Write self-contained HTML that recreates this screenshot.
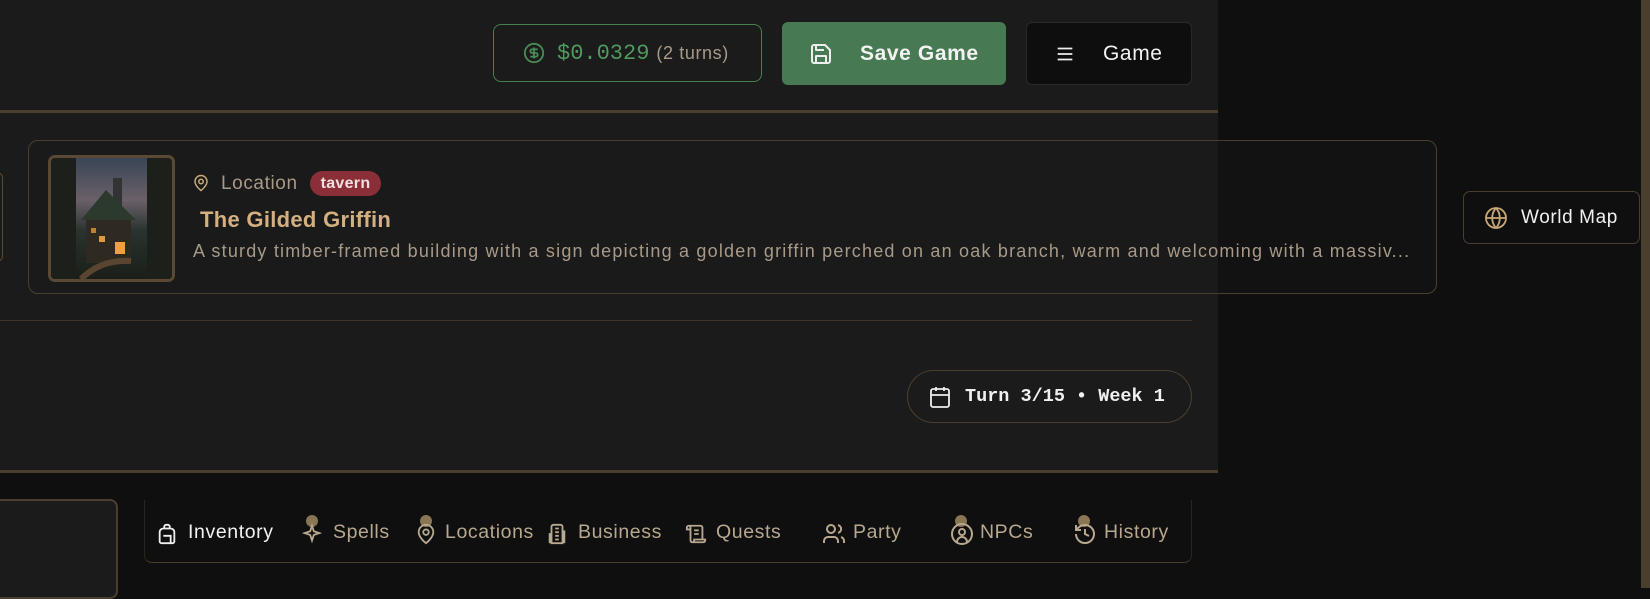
<!DOCTYPE html>
<html><head><meta charset="utf-8"><style>
*{box-sizing:border-box;margin:0;padding:0}
body{width:1650px;height:588px;overflow:hidden;background:#0f0f0f;font-family:"Liberation Sans",sans-serif;position:relative;letter-spacing:0.6px}
.a{position:absolute}
.mono{font-family:"Liberation Mono",monospace;letter-spacing:0}
</style></head><body>
<div class="a" style="left:0;top:0;width:1218px;height:472px;background:#1b1b1b"></div>
<div class="a" style="left:1641px;top:0;width:9px;height:588px;background:#4a3f2e"></div>
<div class="a" style="left:0;top:110px;width:1218px;height:3px;background:#4a3f2e"></div>
<div class="a" style="left:0;top:470px;width:1218px;height:3px;background:#4a3f2e"></div>
<div class="a" style="left:0;top:320px;width:1192px;height:1px;background:#3d352a"></div>

<!-- cost -->
<div class="a" style="left:493px;top:24px;width:269px;height:58px;border:1px solid #47804f;border-radius:8px;display:flex;align-items:center;padding-left:29px">
<svg width="22" height="22" viewBox="0 0 24 24" fill="none" stroke="#4a8a55" stroke-width="2"><circle cx="12" cy="12" r="10"/><path d="M16 8h-6a2 2 0 0 0 0 4h4a2 2 0 0 1 0 4H8M12 18V6"/></svg>
<span class="mono" style="color:#4f9a5c;font-size:22px;margin-left:12px">$0.0329</span>
<span style="color:#a89a88;font-size:18px;margin-left:7px">(2 turns)</span></div>
<!-- save -->
<div class="a" style="left:782px;top:22px;width:224px;height:63px;background:#477a52;border-radius:6px;display:flex;align-items:center;padding-left:27px">
<svg width="24" height="24" viewBox="0 0 24 24" fill="none" stroke="#eee" stroke-width="2" stroke-linejoin="round"><path d="M5 3h11l5 5v11a2 2 0 0 1-2 2H5a2 2 0 0 1-2-2V5a2 2 0 0 1 2-2z"/><path d="M7 3v5h8M7 21v-7h10v7"/></svg>
<span style="color:#f2f2f2;font-size:21px;font-weight:bold;margin-left:27px">Save Game</span></div>
<!-- game -->
<div class="a" style="left:1026px;top:22px;width:166px;height:63px;background:#0e0e0e;border:1px solid #2a2a2a;border-radius:6px;display:flex;align-items:center;padding-left:27px">
<svg width="22" height="22" viewBox="0 0 24 24" fill="none" stroke="#eee" stroke-width="2"><path d="M4 6h16M4 12h16M4 18h16"/></svg>
<span style="color:#f2f2f2;font-size:21px;margin-left:27px">Game</span></div>

<!-- left partial -->
<div class="a" style="left:-20px;top:172px;width:23px;height:90px;border:1px solid #5a4a30;border-radius:6px"></div>
<!-- location card -->
<div class="a" style="left:28px;top:140px;width:1409px;height:154px;border:1px solid #4a3f2e;border-radius:10px;background:rgba(27,27,27,0.35)"></div>
<div class="a" style="left:48px;top:155px;width:127px;height:127px;border:3px solid #5a4a35;border-radius:7px;overflow:hidden">
<svg width="121" height="121" viewBox="0 0 121 121"><defs><linearGradient id="s" x1="0" y1="0" x2="0" y2="1"><stop offset="0" stop-color="#3a4555"/><stop offset=".35" stop-color="#6a6068"/><stop offset=".6" stop-color="#2a3330"/><stop offset="1" stop-color="#1a1e18"/></linearGradient></defs>
<rect width="121" height="121" fill="url(#s)"/>
<path d="M0 0h25v121H0zM96 0h25v121H96z" fill="#1c1f1a"/>
<path d="M35 60l20-25 25 25v45H35z" fill="#2e2a22"/>
<rect x="62" y="20" width="9" height="40" fill="#333"/>
<path d="M30 62l25-30 30 30z" fill="#2c3a2e"/>
<rect x="48" y="78" width="6" height="6" fill="#e09a40"/><rect x="64" y="84" width="10" height="12" fill="#f0a040"/><rect x="40" y="70" width="5" height="5" fill="#c08030"/>
<path d="M30 121q20-20 50-18" stroke="#5a4530" stroke-width="6" fill="none"/></svg></div>
<svg class="a" style="left:192px;top:173px" width="18" height="20" viewBox="0 0 24 24" fill="none" stroke="#c9a878" stroke-width="2"><path d="M20 10c0 6-8 12-8 12S4 16 4 10a8 8 0 0 1 16 0z"/><circle cx="12" cy="10" r="3"/></svg>
<div class="a" style="left:221px;top:173px;color:#a89a88;font-size:19px">Location</div>
<div class="a" style="left:310px;top:171px;width:71px;height:25px;background:#8a2e38;border-radius:13px;color:#f0e0e0;font-size:16px;font-weight:bold;text-align:center;line-height:25px;letter-spacing:0.3px">tavern</div>
<div class="a" style="left:200px;top:207px;color:#d4b080;font-size:22px;font-weight:bold;letter-spacing:0.3px">The Gilded Griffin</div>
<div class="a" style="left:193px;top:241px;color:#a89a88;font-size:18px;white-space:nowrap;letter-spacing:1.2px">A sturdy timber-framed building with a sign depicting a golden griffin perched on an oak branch, warm and welcoming with a massiv...</div>

<!-- world map -->
<div class="a" style="left:1463px;top:191px;width:177px;height:53px;border:1px solid #4a3f2e;border-radius:7px;display:flex;align-items:center;padding-left:20px">
<svg width="24" height="24" viewBox="0 0 24 24" fill="none" stroke="#c9a878" stroke-width="1.8"><circle cx="12" cy="12" r="10"/><path d="M2 12h20M12 2a15 15 0 0 1 0 20M12 2a15 15 0 0 0 0 20"/></svg>
<span style="color:#f0f0f0;font-size:19px;margin-left:13px">World Map</span></div>

<!-- turn -->
<div class="a" style="left:907px;top:370px;width:285px;height:53px;border:1px solid #4a3f2e;border-radius:27px;display:flex;align-items:center;padding-left:20px">
<svg width="24" height="24" viewBox="0 0 24 24" fill="none" stroke="#eee" stroke-width="1.8"><rect x="3" y="4" width="18" height="18" rx="2"/><path d="M16 2v4M8 2v4M3 10h18"/></svg>
<span class="mono" style="color:#f0f0f0;font-size:18.5px;font-weight:bold;margin-left:13px">Turn 3/15 • Week 1</span></div>

<!-- bottom -->
<div class="a" style="left:-10px;top:499px;width:128px;height:100px;background:#1b1b1b;border:2px solid #4a3f2e;border-radius:8px"></div>
<div class="a" style="left:144px;top:500px;width:1048px;height:63px;border-bottom:1px solid #4a3f2e;border-left:1px solid #2a251e;border-right:1px solid #2a251e;border-radius:0 0 8px 8px"></div>
<div class="a" style="left:0;top:521px;width:1200px;height:26px;font-size:19.5px;color:#b8a88f">
<svg class="a" style="left:156px;top:1px" width="22" height="24" viewBox="0 0 24 24" fill="none" stroke="#eee" stroke-width="2"><path d="M4 10a4 4 0 0 1 4-4h8a4 4 0 0 1 4 4v10a2 2 0 0 1-2 2H6a2 2 0 0 1-2-2z M9 6V4a2 2 0 0 1 2-2h2a2 2 0 0 1 2 2v2M8 14h8v8"/></svg>
<span class="a" style="left:188px;top:0;color:#f2f2f2">Inventory</span>
<div class="a" style="left:306px;top:-6px;width:12px;height:12px;border-radius:6px;background:#8a7555"></div>
<svg class="a" style="left:301px;top:2px" width="22" height="22" viewBox="0 0 24 24" fill="none" stroke="#b8a88f" stroke-width="2"><path d="M12 3l2 6 6 2-6 2-2 6-2-6-6-2 6-2z"/></svg>
<span class="a" style="left:333px;top:0">Spells</span>
<div class="a" style="left:420px;top:-6px;width:12px;height:12px;border-radius:6px;background:#8a7555"></div>
<svg class="a" style="left:415px;top:1px" width="22" height="24" viewBox="0 0 24 24" fill="none" stroke="#b8a88f" stroke-width="2"><path d="M20 10c0 6-8 12-8 12S4 16 4 10a8 8 0 0 1 16 0z"/><circle cx="12" cy="10" r="3"/></svg>
<span class="a" style="left:445px;top:0">Locations</span>
<svg class="a" style="left:546px;top:1px" width="22" height="24" viewBox="0 0 24 24" fill="none" stroke="#b8a88f" stroke-width="2"><path d="M6 22V4a2 2 0 0 1 2-2h8a2 2 0 0 1 2 2v18zM6 12H4v10M18 9h2v13M10 6h4M10 10h4M10 14h4M10 18h4"/></svg>
<span class="a" style="left:578px;top:0">Business</span>
<svg class="a" style="left:685px;top:1px" width="22" height="24" viewBox="0 0 24 24" fill="none" stroke="#b8a88f" stroke-width="2"><path d="M15 12h-5M15 8h-5M19 17V5a2 2 0 0 0-2-2H4M8 21h12a2 2 0 0 0 2-2v-1H10v1a2 2 0 1 1-4 0V5a2 2 0 1 0-4 0v2h4"/></svg>
<span class="a" style="left:716px;top:0">Quests</span>
<svg class="a" style="left:822px;top:1px" width="24" height="24" viewBox="0 0 24 24" fill="none" stroke="#b8a88f" stroke-width="2"><path d="M16 21v-2a4 4 0 0 0-4-4H6a4 4 0 0 0-4 4v2"/><circle cx="9" cy="7" r="4"/><path d="M22 21v-2a4 4 0 0 0-3-3.9M16 3.1a4 4 0 0 1 0 7.8"/></svg>
<span class="a" style="left:853px;top:0">Party</span>
<div class="a" style="left:955px;top:-6px;width:12px;height:12px;border-radius:6px;background:#8a7555"></div>
<svg class="a" style="left:950px;top:1px" width="24" height="24" viewBox="0 0 24 24" fill="none" stroke="#b8a88f" stroke-width="2"><circle cx="12" cy="12" r="10"/><circle cx="12" cy="10" r="3"/><path d="M7 20a5 5 0 0 1 10 0"/></svg>
<span class="a" style="left:980px;top:0">NPCs</span>
<div class="a" style="left:1078px;top:-6px;width:12px;height:12px;border-radius:6px;background:#8a7555"></div>
<svg class="a" style="left:1073px;top:1px" width="24" height="24" viewBox="0 0 24 24" fill="none" stroke="#b8a88f" stroke-width="2"><path d="M3 12a9 9 0 1 0 9-9 9.75 9.75 0 0 0-6.74 2.74L3 8M3 3v5h5M12 7v5l4 2"/></svg>
<span class="a" style="left:1104px;top:0">History</span>
</div>
</body></html>
